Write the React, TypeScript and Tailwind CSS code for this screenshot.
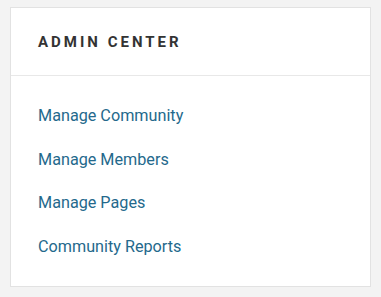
import React from 'react';

const links = ['Manage Community', 'Manage Members', 'Manage Pages', 'Community Reports'];

export default function App() {
  return (
    <div className="h-[297px] w-[381px] bg-[#f3f3f3] pt-[7px] pl-[10px]" style={{ fontFamily: 'Roboto, sans-serif' }}>
      <div className="w-[361px] h-[280px] border border-[#e2e2e2] bg-white">
        <div className="h-[68px] flex items-center px-[27px] border-b border-[#e8e8e8]">
          <h2 className="text-[15px] font-bold tracking-[0.2em] text-[#333333] pt-[1px]">ADMIN CENTER</h2>
        </div>
        <ul className="pt-[28px] px-[27px] flex flex-col gap-[19.5px]">
          {links.map((l) => (
            <li key={l} className="leading-[24px]">
              <a href="#" className="text-[16.2px] text-[#24698c]">{l}</a>
            </li>
          ))}
        </ul>
      </div>
    </div>
  );
}
